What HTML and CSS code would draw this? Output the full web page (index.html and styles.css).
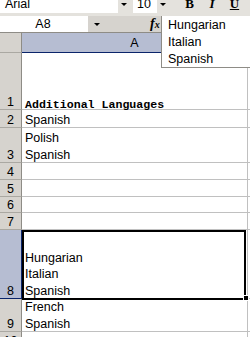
FILE: index.html
```html
<!DOCTYPE html>
<html lang="en">
<head>
    <meta charset="UTF-8">
    <title>Additional Languages</title>
    <link rel="stylesheet" href="styles.css">
</head>
<body>

<div class="toolbar">
    <div class="combo font-name"><span>Arial</span></div>
    <div class="drop-btn"><span class="arrow"></span></div>
    <div class="combo font-size"><span>10</span></div>
    <div class="drop-btn"><span class="arrow"></span></div>
    <div class="tool tool-b">B</div>
    <div class="tool tool-i">I</div>
    <div class="tool tool-u">U</div>
</div>

<div class="formula-bar">
    <div class="name-box">A8</div>
    <div class="name-drop"><span class="arrow"></span></div>
    <div class="fx">f<span>x</span></div>
    <!-- contenu de la cellule A8 -->
    <div class="formula-popup">Hungarian<br>Italian<br>Spanish</div>
</div>

<div class="sheet">
    <div class="row head">
        <div class="rh corner"></div>
        <div class="cell col-head">A</div>
        <div class="rest"></div>
    </div>
    <div class="row r1">
        <div class="rh"><span class="val">1</span></div>
        <div class="cell title"><span class="val">Additional Languages</span></div>
        <div class="rest"></div>
    </div>
    <div class="row r2">
        <div class="rh"><span class="val">2</span></div>
        <div class="cell"><span class="val">Spanish</span></div>
        <div class="rest"></div>
    </div>
    <div class="row r3">
        <div class="rh"><span class="val">3</span></div>
        <div class="cell"><span class="val">Polish<br>Spanish</span></div>
        <div class="rest"></div>
    </div>
    <div class="row r4">
        <div class="rh"><span class="val">4</span></div>
        <div class="cell"></div>
        <div class="rest"></div>
    </div>
    <div class="row r5">
        <div class="rh"><span class="val">5</span></div>
        <div class="cell"></div>
        <div class="rest"></div>
    </div>
    <div class="row r6">
        <div class="rh"><span class="val">6</span></div>
        <div class="cell"></div>
        <div class="rest"></div>
    </div>
    <div class="row r7">
        <div class="rh"><span class="val">7</span></div>
        <div class="cell"></div>
        <div class="rest"></div>
    </div>
    <div class="row r8 selected">
        <div class="rh"><span class="val">8</span></div>
        <div class="cell active"><span class="val">Hungarian<br>Italian<br>Spanish</span></div>
        <div class="rest"></div>
    </div>
    <div class="row r9">
        <div class="rh"><span class="val">9</span></div>
        <div class="cell"><span class="val">French<br>Spanish</span></div>
        <div class="rest"></div>
    </div>
    <div class="row r10">
        <div class="rh"><span class="val">10</span></div>
        <div class="cell"></div>
        <div class="rest"></div>
    </div>
</div>

</body>
</html>
```

FILE: styles.css
```css
body {
    margin: 0;
    width: 250px;
    height: 337px;
    overflow: hidden;
    position: relative;
    background-color: #fff;
    font-family: "Liberation Sans", Arial, sans-serif;
    font-size: 12.5px;
    color: #000;
}

/* barre d'outils */
.toolbar {
    height: 16px;
    display: flex;
    align-items: flex-start;
    background-color: #e4e2dd;
}

.combo {
    background-color: #fff;
    height: 13px;
    line-height: 8px;
    overflow: hidden;
}

.font-name {
    width: 113px;
    padding-left: 5px;
}

.font-size {
    width: 20px;
    padding-left: 4px;
    margin-left: 3px;
}

.drop-btn {
    width: 12px;
    height: 13px;
    position: relative;
}

.arrow {
    position: absolute;
    left: 3px;
    top: 3px;
    border-left: 3px solid transparent;
    border-right: 3px solid transparent;
    border-top: 3px solid #000;
}

.tool {
    font-family: "Liberation Serif", serif;
    font-weight: bold;
    font-size: 13px;
    line-height: 8px;
    height: 13px;
    width: 23px;
    text-align: center;
    overflow: hidden;
}

.tool-b {
    margin-left: 9px;
}

.tool-i {
    font-style: italic;
    width: 22px;
}

.tool-u {
    text-decoration: underline;
}

/* barre de formule */
.formula-bar {
    height: 16px;
    display: flex;
    background-color: #d6d3ce;
}

.name-box {
    width: 86px;
    padding-right: 2px;
    height: 16px;
    line-height: 17px;
    text-align: center;
    background-color: #fff;
}

.name-drop {
    width: 18px;
    position: relative;
}

.name-drop .arrow {
    left: 6px;
    top: 7px;
}

.fx {
    margin-left: 44px;
    font-family: "Liberation Serif", serif;
    font-style: italic;
    font-weight: bold;
    font-size: 14px;
    line-height: 16px;
}

.fx span {
    font-size: 10px;
}

.formula-popup {
    position: absolute;
    left: 161px;
    top: 16px;
    width: 82px;
    height: 50px;
    padding: 1px 0 0 6px;
    line-height: 17px;
    background-color: #fff;
    border-left: 1px solid #8e8c86;
    border-bottom: 1px solid #8e8c86;
    z-index: 5;
}

/* feuille */
.row {
    display: flex;
}

.rh {
    width: 21px;
    flex: none;
    background-color: #d6d3ce;
    border-right: 1px solid #8e8c86;
    border-bottom: 1px solid #aaa8a2;
    text-align: center;
    display: flex;
    flex-direction: column;
    justify-content: flex-end;
    line-height: 16.5px;
}

.cell {
    width: 222px;
    flex: none;
    padding-left: 3px;
    border-right: 1px solid #c0c0c0;
    border-bottom: 1px solid #c0c0c0;
    display: flex;
    flex-direction: column;
    justify-content: flex-end;
    line-height: 16.5px;
    position: relative;
}

.val {
    display: block;
    margin-bottom: -1px;
}

.rest {
    flex: 1;
    border-bottom: 1px solid #c0c0c0;
}

.head .rh,
.head .cell,
.head .rest {
    border-top: 1px solid #8e8c86;
}

.head .cell {
    background-color: #b6bdd2;
    border-bottom: 1px solid #0a246a;
    border-right-color: #8e8c86;
    justify-content: center;
    align-items: center;
    padding: 2px 0 0 0;
    width: 225px;
}

.head .rest {
    background-color: #d6d3ce;
}

.head > div {
    height: 19px;
}

.head .cell {
    height: 17px;
}

.title {
    font-family: "Liberation Mono", "Courier New", monospace;
    font-weight: bold;
    font-size: 11.6px;
    line-height: 10px;
}

.r1 > div { height: 56px; }
.r2 > div { height: 17px; }
.r3 > div { height: 34px; }
.r4 > div { height: 16px; }
.r5 > div { height: 16px; }
.r6 > div { height: 15px; }
.r7 > div { height: 16px; }
.r8 > div { height: 68px; }
.r9 > div { height: 32px; }
.r10 > div { height: 16px; }

.selected .rh {
    background-color: #b6bdd2;
    border-right-color: #0a246a;
    border-bottom-color: #0a246a;
}

/* cellule active */
.active::after {
    content: "";
    position: absolute;
    left: 0;
    top: 0;
    width: 220px;
    height: 66px;
    border: 2px solid #000;
}

.active::before {
    content: "";
    position: absolute;
    right: -2px;
    bottom: -3px;
    width: 4px;
    height: 4px;
    background-color: #000;
    border: 1px solid #fff;
    z-index: 1;
}
```
